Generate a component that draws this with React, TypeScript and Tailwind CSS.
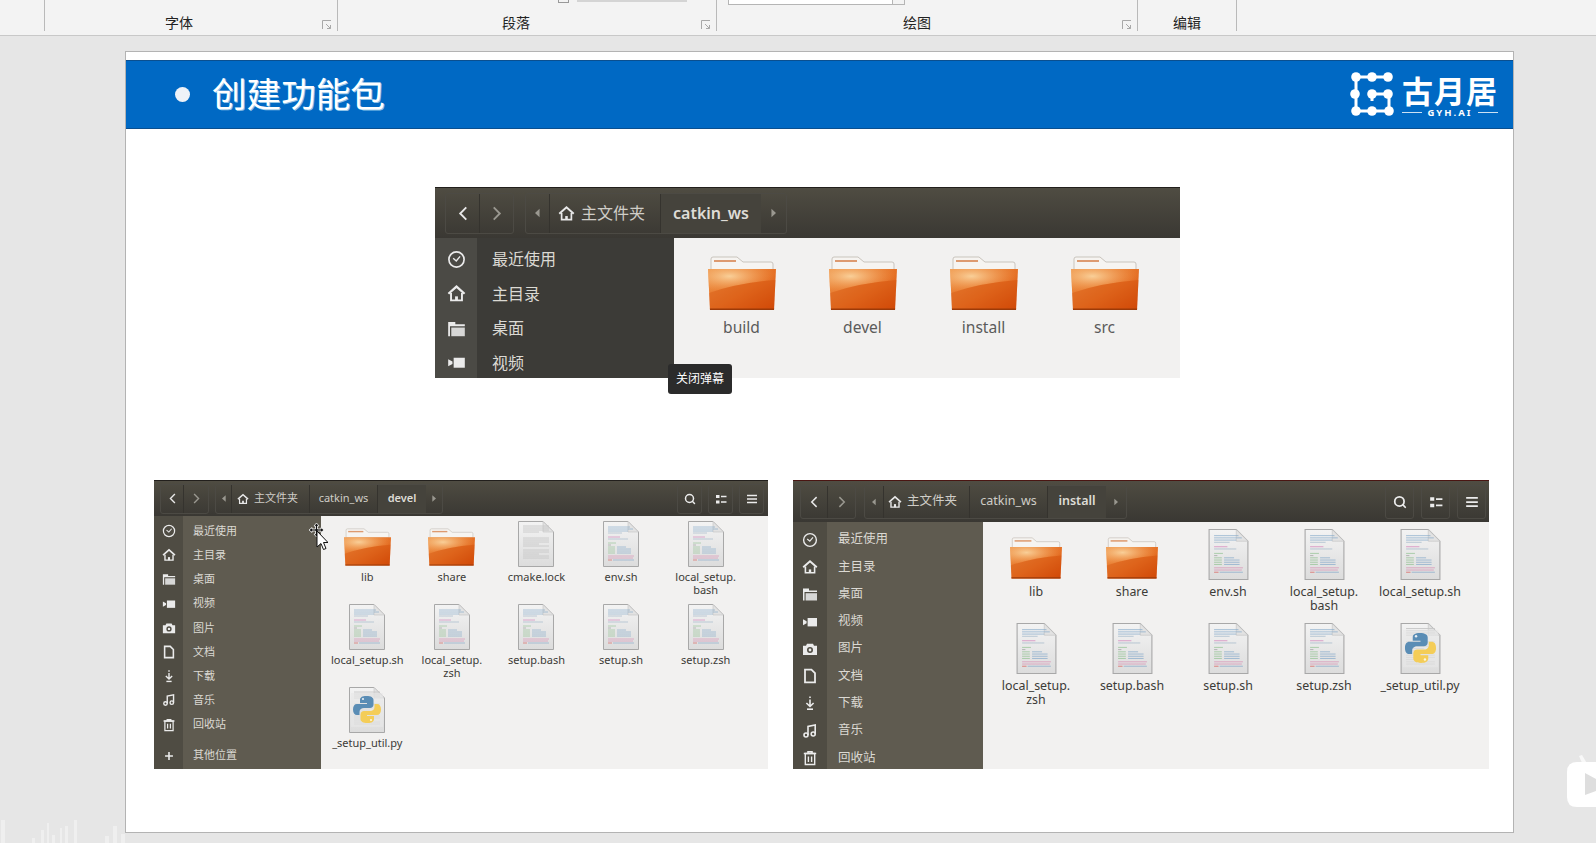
import type { ReactNode } from 'react'
import { Search } from 'lucide-react'

type IconName = 'recent' | 'home' | 'desktop' | 'video' | 'photo' | 'doc' | 'down' | 'music' | 'trash' | 'plus'

function NavIcon({ name, className }: { name: IconName; className: string }) {
  const line = { fill: 'none', stroke: 'currentColor', strokeWidth: 1.6 }
  return (
    <svg viewBox="0 0 16 16" className={className} fill="currentColor">
      {name === 'recent' && (
        <>
          <circle cx="8" cy="8" r="6.4" {...line} strokeWidth={1.4} />
          <path d="M5.2 7 7.8 9.2 11 5.4" {...line} strokeWidth={1.2} />
        </>
      )}
      {name === 'home' && (
        <>
          <path d="M1.2 8.2 8 2.2l6.8 6" {...line} strokeWidth={1.9} />
          <path d="M3.4 7.6v6.2h9.2V7.6" {...line} />
          <path d="M6.8 14v-3.6h2.4V14z" />
        </>
      )}
      {name === 'desktop' && (
        <>
          <path d="M1 2.5h6v2h8V6H2.5v8.5H1z" />
          <path d="M3.6 7.2H15v7.3H3.6z" opacity=".88" />
        </>
      )}
      {name === 'video' && (
        <>
          <path d="M5.6 4H15v8.4H5.6z" />
          <path d="M1 5.2l3.6 2v2l-3.6 2z" />
        </>
      )}
      {name === 'photo' && (
        <path
          fillRule="evenodd"
          d="M5 2.8h6l1 2h3v9.2H1V4.800h3zM8 6a3 3 0 1 0 0 6 3 3 0 0 0 0-6zm0 1.600a1.400 1.400 0 1 1 0 2.800 1.400 1.400 0 0 1 0-2.800z"
        />
      )}
      {name === 'doc' && <path d="M3 1.600h6.400L13 5.200v9.200H3z" {...line} strokeWidth={1.8} />}
      {name === 'down' && (
        <>
          <path d="M8 1.500v1.500M8 4.500v6.500M4.400 8 8 11.500 11.600 8" {...line} />
          <path d="M5 14.200h6" {...line} />
        </>
      )}
      {name === 'music' && (
        <>
          <path d="M6 12V3.400l7.200-1.400v8.800" {...line} />
          <circle cx="4" cy="12" r="2" {...line} />
          <circle cx="11.200" cy="11" r="2" {...line} />
        </>
      )}
      {name === 'trash' && (
        <>
          <path d="M1.800 3.500h12.400M6 3.500V1.800h4v1.700" {...line} />
          <path d="M3.300 3.500h9.400v11H3.300zM6.400 6.500v5.400M9.600 6.500v5.400" {...line} strokeWidth={1.4} />
        </>
      )}
      {name === 'plus' && <path d="M8 3.500v9M3.500 8h9" {...line} strokeWidth={1.8} />}
    </svg>
  )
}

function Folder({ className }: { className: string }) {
  return (
    <svg viewBox="0 0 68 56" className={className}>
      <defs>
        <linearGradient id="folderFront" x1="0" y1="0" x2="1" y2="1">
          <stop offset="0" stopColor="#ee9347" />
          <stop offset="0.55" stopColor="#e56f24" />
          <stop offset="1" stopColor="#d24807" />
        </linearGradient>
        <radialGradient id="folderGlow" cx="0.32" cy="0.3" r="0.7">
          <stop offset="0" stopColor="#f9cf98" />
          <stop offset="1" stopColor="#f3a45c" stopOpacity="0" />
        </radialGradient>
      </defs>
      <path d="M3 14V3a2 2 0 0 1 2-2h24l6 5h28a2 2 0 0 1 2 2v6z" fill="#f6f4f1" stroke="#c9c4bd" />
      <path d="M6 4h22v2H6z" fill="#dd9a70" />
      <path d="M0 13h68l-2 41H2z" fill="url(#folderFront)" />
      <path d="M1 37Q30 27 67 24V13H0z" fill="url(#folderGlow)" />
      <path d="M1 37Q30 27 67.500 24L66 54H2z" fill="#cc4806" opacity=".3" />
      <path d="M2 54h64l.1-1.500H1.900z" fill="#9c3a08" />
    </svg>
  )
}

const codeLines = [
  [5, 6, 22, '#7fa6c9'], [5, 8, 25, '#7fa6c9'], [5, 10, 20, '#7fa6c9'], [5, 12, 14, '#9db4c8'],
  [5, 16, 12, '#d27ab6'], [5, 18, 20, '#9db4c8'], [5, 22, 8, '#8dc08d'], [5, 24, 3, '#999999'],
  [5, 26, 7, '#8dc08d'], [14, 26, 9, '#7fa6c9'], [5, 28, 7, '#8dc08d'], [14, 28, 14, '#7fa6c9'],
  [5, 30, 7, '#8dc08d'], [14, 30, 14, '#7fa6c9'], [5, 32, 7, '#8dc08d'], [14, 32, 14, '#7fa6c9'],
  [5, 35, 26, '#d88ab0'], [5, 37, 25, '#d88ab0'], [5, 39, 4, '#d9534f'], [10, 39, 21, '#7fa6c9'],
] as const

const textLines = [5, 7, 9, 11, 17, 19, 21, 23, 25, 29, 31, 33, 35, 37]

function FileIcon({ kind, className }: { kind: 'code' | 'text' | 'py'; className: string }) {
  return (
    <svg viewBox="0 0 36 46" className={className}>
      <defs>
        <linearGradient id="sheet" x1="0" y1="0" x2="0" y2="1">
          <stop offset="0" stopColor="#f3f3f3" />
          <stop offset="1" stopColor="#dcdcdc" />
        </linearGradient>
      </defs>
      <path d="M.5.500H25L35.500 11v34.500H.500z" fill="url(#sheet)" stroke="#a8a8a8" />
      <path d="M25 .500V11h10.500z" fill="#e2e2e2" stroke="#c4c4c4" strokeWidth=".6" />
      {kind === 'code' &&
        codeLines.map(([x, y, w, color], i) => (
          <path key={i} d={`M${x} ${y}h${w}`} stroke={color} strokeWidth=".8" opacity=".75" />
        ))}
      {kind !== 'code' &&
        textLines.map((y, i) => <path key={i} d={`M5 ${y}h${i % 4 === 3 ? 16 : 26}`} stroke="#c4c4c4" strokeWidth=".8" />)}
      {kind === 'py' && (
        <>
          <path d="M2 6h32v34H2z" fill="#e8e8e8" opacity=".6" />
          <path
            d="M17.500 9C13 9 11 10.500 11 13v3h7v1H8c-2.500 0-4 2-4 5.500S5.500 28 8 28h2.500v-3c0-2.500 2-4 4.500-4h6c2 0 3.500-1.500 3.500-3.500V13c0-2.500-2.500-4-7-4z"
            fill="#5a8db5"
          />
          <path
            d="M18.500 36c4.500 0 6.500-1.500 6.500-4v-3h-7v-1h10c2.500 0 4-2 4-5.500S30.500 17 28 17h-2.500v3c0 2.500-2 4-4.500 4h-6c-2 0-3.500 1.500-3.500 3.500V32c0 2.500 2.500 4 7 4z"
            fill="#f4cd58"
          />
          <circle cx="14" cy="12" r="1.100" fill="#e8eef3" />
          <circle cx="22" cy="33" r="1.100" fill="#fff7dc" />
        </>
      )}
    </svg>
  )
}

function PathArrow({ dir, className }: { dir: 'l' | 'r'; className: string }) {
  return (
    <svg viewBox="0 0 6 10" className={className} fill="currentColor">
      <path d={dir === 'l' ? 'M5.500 0v10L0 5z' : 'M.5 0v10L6 5z'} />
    </svg>
  )
}

function Chevron({ dir, className }: { dir: 'l' | 'r'; className: string }) {
  return (
    <svg viewBox="0 0 10 16" className={className} fill="none" stroke="currentColor" strokeWidth="2">
      <path d={dir === 'l' ? 'M8.500 1.500 2 8l6.500 6.500' : 'M1.500 1.500 8 8l-6.500 6.500'} />
    </svg>
  )
}

type Item = { name: string; icon: 'folder' | 'code' | 'text' | 'py' }

type Sizes = {
  header: string
  barH: string
  back: string
  forward: string
  gap: string
  crumbArrow: string
  chevron: string
  arrow: string
  homeSeg: string
  homeIcon: string
  crumb: string
  crumbText: string
  active: string
  endArrow: string
  tool: string
  toolIcon: string
  side: string
  strip: string
  navRow: string
  navIcon: string
  navIconCell: string
  navText: string
  grid: string
  iconBox: string
  folder: string
  file: string
  label: string
}

const devel: Sizes = {
  header: 'h-[36px] pl-[6px] pr-[4px] border-[#221f1c]',
  barH: 'h-[30px]',
  back: 'w-[23px]',
  forward: 'w-[24px]',
  gap: 'ml-[6px]',
  crumbArrow: 'w-[16px]',
  chevron: 'w-[7px] h-[11px]',
  arrow: 'w-[4px] h-[7px]',
  homeSeg: 'w-[78px] pl-[5px] gap-[5px]',
  homeIcon: 'w-[12px] h-[12px]',
  crumb: 'w-[68px]',
  crumbText: 'text-[11px]',
  active: 'w-[48px]',
  endArrow: 'w-[16px]',
  tool: 'w-[25px] ml-[6px]',
  toolIcon: 'w-[12px] h-[12px]',
  side: 'w-[167px] pt-[3px] bg-[linear-gradient(to_right,#4f4c43_29px,#5f5b50_29px)]',
  strip: 'w-[29px]',
  navRow: 'h-[24.200px] shrink-0',
  navIcon: 'w-[14px] h-[14px]',
  navIconCell: 'mr-[10px]',
  navText: 'text-[11px]',
  grid: 'pl-[4px] pt-[5px] grid-cols-[repeat(5,84.6px)] auto-rows-[83px]',
  iconBox: 'h-[46px]',
  folder: 'w-[47px] h-[39px]',
  file: 'w-[36px] h-[46px]',
  label: 'mt-[3px] text-[11px] leading-[13px]',
}

const install: Sizes = {
  header: 'h-[42px] pl-[7px] pr-[3px] border-[#4a1512]',
  barH: 'h-[34px]',
  back: 'w-[27px]',
  forward: 'w-[27px]',
  gap: 'ml-[8px]',
  crumbArrow: 'w-[19px]',
  chevron: 'w-[8px] h-[12px]',
  arrow: 'w-[4px] h-[8px]',
  homeSeg: 'w-[86px] pl-[4px] gap-[5px]',
  homeIcon: 'w-[14px] h-[14px]',
  crumb: 'w-[78px]',
  crumbText: 'text-[12.500px]',
  active: 'w-[58px]',
  endArrow: 'w-[20px]',
  tool: 'w-[29px] ml-[7px]',
  toolIcon: 'w-[14px] h-[14px]',
  side: 'w-[190px] pt-[4px] bg-[linear-gradient(to_right,#4f4c43_34px,#5f5b50_34px)]',
  strip: 'w-[34px]',
  navRow: 'h-[27.300px] shrink-0',
  navIcon: 'w-[16px] h-[16px]',
  navIconCell: 'mr-[11px]',
  navText: 'text-[12.500px]',
  grid: 'pl-[5px] pt-[7px] grid-cols-[repeat(5,96px)] auto-rows-[94px]',
  iconBox: 'h-[51px]',
  folder: 'w-[52px] h-[43px]',
  file: 'w-[41px] h-[51px]',
  label: 'mt-[5px] text-[12.400px] leading-[14px]',
}

const catkin: Sizes = {
  header: 'h-[51px] pl-[10px] border-[#221f1c]',
  barH: 'h-[41px]',
  back: 'w-[34px]',
  forward: 'w-[33px]',
  gap: 'ml-[11px]',
  crumbArrow: 'w-[24px]',
  chevron: 'w-[10px] h-[15px]',
  arrow: 'w-[5px] h-[10px]',
  homeSeg: 'w-[111px] pl-[8px] gap-[6px]',
  homeIcon: 'w-[17px] h-[17px]',
  crumb: 'w-[60px]',
  crumbText: 'text-[16px]',
  active: 'w-[100px]',
  endArrow: 'w-[25px]',
  tool: '',
  toolIcon: '',
  side: 'w-[239px] pt-[4px] bg-[linear-gradient(to_right,#4b4a45_42px,#3c3b37_42px)]',
  strip: 'w-[42px]',
  navRow: 'h-[34.500px] shrink-0',
  navIcon: 'w-[19px] h-[19px]',
  navIconCell: 'mr-[15px]',
  navText: 'text-[16px]',
  grid: 'pl-[7px] pt-[18px] grid-cols-[repeat(4,121px)] auto-rows-[94px]',
  iconBox: 'h-[56px]',
  folder: 'w-[68px] h-[56px]',
  file: 'w-[41px] h-[51px]',
  label: 'mt-[4px] text-[15.600px] leading-[22px] !text-[#5b5b5b]',
}

const navItems: [IconName, string][] = [
  ['recent', '最近使用'],
  ['home', '主目录'],
  ['desktop', '桌面'],
  ['video', '视频'],
  ['photo', '图片'],
  ['doc', '文档'],
  ['down', '下载'],
  ['music', '音乐'],
  ['trash', '回收站'],
]

function FileWindow({
  s,
  crumbs,
  active,
  items,
  nav,
  extra,
  tools,
  className,
}: {
  s: Sizes
  crumbs: string[]
  active: string
  items: Item[]
  nav: [IconName, string][]
  extra?: ReactNode
  tools?: boolean
  className: string
}) {
  const seg = 'flex items-center justify-center border-r border-[#35332e]'
  return (
    <div className={`flex flex-col overflow-hidden bg-[#f2f1f0] ${className}`}>
      <div className={`flex items-center shrink-0 border-t bg-gradient-to-b from-[#4f4c42] to-[#3a3833] text-[#cfcdc7] ${s.header}`}>
        <div className={`flex rounded-[3px] border border-[#4c4a44] ${s.barH}`}>
          <div className={`${seg} text-[#e8e8e8] ${s.back}`}>
            <Chevron dir="l" className={s.chevron} />
          </div>
          <div className={`flex items-center justify-center text-[#9a9890] ${s.forward}`}>
            <Chevron dir="r" className={s.chevron} />
          </div>
        </div>
        <div className={`flex rounded-[3px] border border-[#4c4a44] ${s.barH} ${s.gap}`}>
          <div className={`${seg} text-[#9a9890] ${s.crumbArrow}`}>
            <PathArrow dir="l" className={s.arrow} />
          </div>
          <div className={`flex items-center border-r border-[#35332e] ${s.homeSeg} ${s.crumbText}`}>
            <NavIcon name="home" className={`text-[#e8e8e8] ${s.homeIcon}`} />
            <span>主文件夹</span>
          </div>
          {crumbs.map((c) => (
            <div key={c} className={`${seg} ${s.crumb} ${s.crumbText}`}>
              {c}
            </div>
          ))}
          <div className={`flex items-center justify-center bg-[#45433c] font-semibold text-[#dedcd6] ${s.active} ${s.crumbText}`}>
            {active}
          </div>
          <div className={`flex items-center justify-center text-[#9a9890] ${s.endArrow}`}>
            <PathArrow dir="r" className={s.arrow} />
          </div>
        </div>
        {tools && (
          <div className="flex ml-auto">
            <div className={`flex items-center justify-center rounded-[3px] border border-[#4c4a44] text-[#ececec] ${s.barH} ${s.tool}`}>
              <Search className={s.toolIcon} strokeWidth={3} />
            </div>
            <div className={`flex items-center justify-center rounded-[3px] border border-[#4c4a44] text-[#ececec] ${s.barH} ${s.tool}`}>
              <svg viewBox="0 0 12 12" className={s.toolIcon} fill="currentColor">
                <path d="M1 2h3.500v3H1zM1 7.500h3.500v3H1zM6 2.800h5.500v1.500H6zM6 8.200h5.500v1.500H6z" />
              </svg>
            </div>
            <div className={`flex items-center justify-center rounded-[3px] border border-[#4c4a44] text-[#ececec] ${s.barH} ${s.tool}`}>
              <svg viewBox="0 0 12 12" className={s.toolIcon} fill="currentColor">
                <path d="M1 1.800h10v1.500H1zM1 5.300h10v1.500H1zM1 8.800h10v1.500H1z" />
              </svg>
            </div>
          </div>
        )}
      </div>
      <div className="flex flex-1 min-h-0">
        <div className={`flex flex-col shrink-0 overflow-hidden text-[#dbd9d3] ${s.side}`}>
          {nav.map(([icon, text]) => (
            <div key={text} className={`flex items-center ${s.navRow} ${s.navText}`}>
              <div className={`flex justify-center shrink-0 text-[#ebebeb] ${s.strip} ${s.navIconCell}`}>
                <NavIcon name={icon} className={s.navIcon} />
              </div>
              {text}
            </div>
          ))}
          {extra}
        </div>
        <div className={`grid flex-1 ${s.grid}`}>
          {items.map((it) => (
            <div key={it.name} className="flex flex-col items-center">
              <div className={`flex items-end justify-center ${s.iconBox}`}>
                {it.icon === 'folder' ? <Folder className={s.folder} /> : <FileIcon kind={it.icon} className={s.file} />}
              </div>
              <div className={`whitespace-pre text-center text-[#3c3b37] ${s.label}`}>{it.name}</div>
            </div>
          ))}
        </div>
      </div>
    </div>
  )
}

function RibbonGroup({ width, pad, label, launcher = true }: { width: string; pad: string; label: string; launcher?: boolean }) {
  return (
    <div className={`flex items-end h-full border-r border-[#b9b9b9] pb-[1px] ${width} ${pad}`}>
      <span className="text-[14px] leading-[14px] text-[#222222]">{label}</span>
      {launcher && (
        <svg viewBox="0 0 10 10" className="w-[10px] h-[10px] ml-auto mr-[5px]" fill="none" stroke="#a8a8a8">
          <path d="M.5 9V.5H9M4 4l4.500 4.500M5 8.500h3.500V5" />
        </svg>
      )}
    </div>
  )
}

function Logo() {
  const nodes = [
    [8, 7], [24, 7], [40, 7], [7, 24], [24, 24], [40, 24], [8, 41], [24, 41], [41, 41],
  ]
  return (
    <div className="mr-[15px] mt-[6px] flex items-center gap-[4px]">
      <svg viewBox="0 0 50 50" className="-mt-[6px] h-[50px] w-[50px]" fill="#ffffff">
        <path d="M40 7H8v34h33V24H24v7" fill="none" stroke="#ffffff" strokeWidth="3" />
        {nodes.map(([x, y]) => (
          <circle key={`${x}-${y}`} cx={x} cy={y} r="4.800" />
        ))}
      </svg>
      <div className="flex w-[96px] flex-col items-center text-white">
        <div className="whitespace-nowrap text-[31px] font-bold leading-[26px] tracking-[1px]">古月居</div>
        <div className="mt-[3px] flex w-full items-center gap-[5px] text-[9.500px] font-bold leading-[11px] tracking-[2px]">
          <span className="h-px flex-1 bg-white/80" />
          GYH.AI
          <span className="h-px flex-1 bg-white/80" />
        </div>
      </div>
    </div>
  )
}

const develItems: Item[] = [
  { name: 'lib', icon: 'folder' },
  { name: 'share', icon: 'folder' },
  { name: 'cmake.lock', icon: 'text' },
  { name: 'env.sh', icon: 'code' },
  { name: 'local_setup.\nbash', icon: 'code' },
  { name: 'local_setup.sh', icon: 'code' },
  { name: 'local_setup.\nzsh', icon: 'code' },
  { name: 'setup.bash', icon: 'code' },
  { name: 'setup.sh', icon: 'code' },
  { name: 'setup.zsh', icon: 'code' },
  { name: '_setup_util.py', icon: 'py' },
]

const installItems: Item[] = [
  { name: 'lib', icon: 'folder' },
  { name: 'share', icon: 'folder' },
  { name: 'env.sh', icon: 'code' },
  { name: 'local_setup.\nbash', icon: 'code' },
  { name: 'local_setup.sh', icon: 'code' },
  { name: 'local_setup.\nzsh', icon: 'code' },
  { name: 'setup.bash', icon: 'code' },
  { name: 'setup.sh', icon: 'code' },
  { name: 'setup.zsh', icon: 'code' },
  { name: '_setup_util.py', icon: 'py' },
]

const catkinItems: Item[] = ['build', 'devel', 'install', 'src'].map((name) => ({ name, icon: 'folder' }))

export default function App() {
  return (
    <div className="relative h-[843px] w-[1596px] overflow-hidden bg-[#e6e6e6] font-['Noto_Sans','Noto_Sans_CJK_SC',sans-serif]">
      {/* ribbon */}
      <div className="relative h-[36px] border-b border-[#c8c8c8] bg-[#f3f3f3]">
        <div className="flex h-[31px]">
          <div className="h-full w-[45px] border-r border-[#b9b9b9]" />
          <RibbonGroup width="w-[293px]" pad="pl-[120px]" label="字体" />
          <RibbonGroup width="w-[379px]" pad="pl-[164px]" label="段落" />
          <RibbonGroup width="w-[421px]" pad="pl-[186px]" label="绘图" />
          <RibbonGroup width="w-[99px]" pad="pl-[35px]" label="编辑" launcher={false} />
        </div>
        <div className="absolute left-[558px] -top-[7px] h-[10px] w-[11px] border border-[#999999]" />
        <div className="absolute left-[577px] top-0 h-[2px] w-[110px] bg-[#d4d4d4]" />
        <div className="absolute left-[728px] -top-[1px] flex h-[6px] w-[177px] justify-end border border-[#b5b5b5] bg-white">
          <div className="w-[12px] border-l border-[#b5b5b5] bg-[#f3f3f3]" />
        </div>
      </div>

      {/* slide */}
      <div className="ml-[125px] mt-[15px] h-[782px] w-[1389px] border border-[#b3b3b3] bg-white pt-[8px]">
        <div className="flex h-[69px] items-center border-y border-[#0a4f8f] bg-[#0069c4]">
          <div className="ml-[49px] h-[15px] w-[15px] rounded-full bg-[#eef2f8]" />
          <h1 className="ml-[22px] text-[34.600px] font-normal leading-none text-white [text-shadow:1px_1px_0_#8fc3e8]">创建功能包</h1>
          <div className="ml-auto">
            <Logo />
          </div>
        </div>

        <FileWindow
          s={catkin}
          crumbs={[]}
          active="catkin_ws"
          items={catkinItems}
          nav={navItems.slice(0, 4)}
          className="ml-[309px] mt-[58px] h-[191px] w-[745px]"
        />

        <div className="ml-[28px] mt-[102px] flex gap-[25px]">
          <FileWindow
            s={devel}
            crumbs={['catkin_ws']}
            active="devel"
            items={develItems}
            nav={navItems}
            tools
            extra={
              <div className="mt-[7px] flex h-[24px] items-center text-[11px]">
                <div className="mr-[10px] flex w-[29px] justify-center text-[#ebebeb]">
                  <NavIcon name="plus" className="h-[14px] w-[14px]" />
                </div>
                其他位置
              </div>
            }
            className="h-[289px] w-[614px]"
          />
          <FileWindow
            s={install}
            crumbs={['catkin_ws']}
            active="install"
            items={installItems}
            nav={navItems}
            tools
            className="h-[289px] w-[696px]"
          />
        </div>
      </div>

      {/* video player overlays */}
      <div className="absolute left-[668px] top-[364px] flex h-[30px] w-[64px] items-center justify-center rounded-[3px] bg-[#2b2b2b] text-[12px] text-white">
        关闭弹幕
      </div>
      <svg viewBox="0 0 20 30" className="absolute left-[308px] top-[523px] h-[30px] w-[20px]">
        <path
          d="M8.500 0 11 3H9.500v3H13V4.500L16 7l-3 2.500V8H9.500v3H11l-2.500 3L6 11h1.500V8H4v1.500L1 7l3-2.500V6h3.500V3H6z"
          fill="#111111"
          stroke="#ffffff"
          strokeWidth=".8"
        />
        <path d="M9 8v16l4-3.500 2.500 6 2.500-1-2.500-6H20z" fill="#ffffff" stroke="#111111" strokeWidth="1" />
      </svg>
      <svg viewBox="0 0 29 52" className="absolute left-[1567px] top-[755px] h-[52px] w-[29px]">
        <path d="M16 10 12 1l3-1 6 10z" fill="#f8f8f8" />
        <path d="M10 7h19v45H10Q0 52 0 42V17Q0 7 10 7z" fill="#ffffff" />
        <path d="M18 18l11 6v12l-11 4z" fill="#dedede" />
      </svg>
      <svg viewBox="0 0 130 23" className="absolute left-0 top-[820px] h-[23px] w-[130px]" fill="#efefef">
        <path d="M1 0h4v23H1zM32 18h3v5h-3zM41 10h3v13h-3zM47 3h2v20h-2zM52 15h3v8h-3zM60 8h2v15h-2zM65 6h3v17h-3zM74 0h3v23h-3zM105 16h4v7h-4zM113 6h4v17h-4zM121 14h4v9h-4z" />
      </svg>
    </div>
  )
}
